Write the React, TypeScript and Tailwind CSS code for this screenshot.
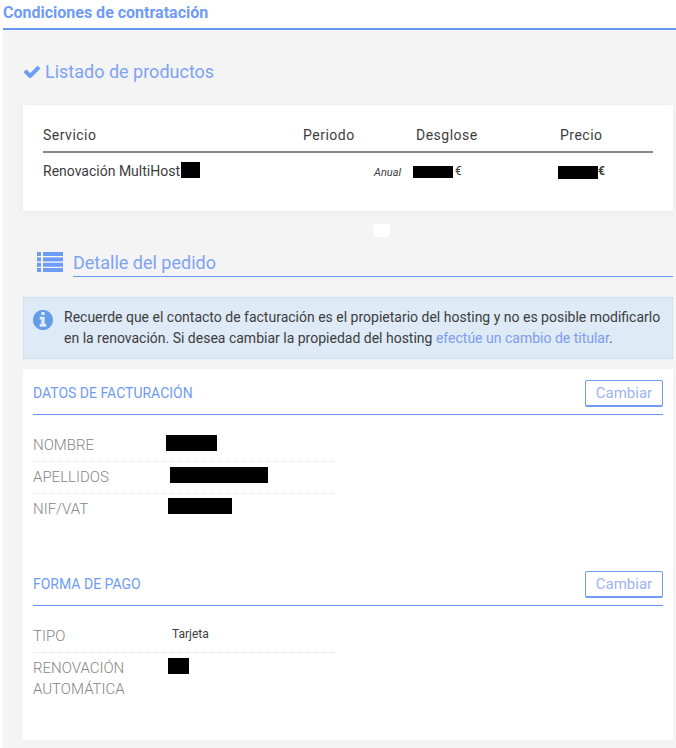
function Redacted({ className }: { className: string }) {
  return <span className={`block bg-black ${className}`} />;
}

function CheckIcon() {
  return (
    <svg viewBox="121 290 1550 1140" className="h-[13px] w-[16px] fill-[#6c9cf5]">
      <path d="M1671 566q0 40-28 68l-724 724-136 136q-28 28-68 28t-68-28l-136-136-362-362q-28-28-28-68t28-68l136-136q28-28 68-28t68 28l294 295 656-657q28-28 68-28t68 28l136 136q28 28 28 68z" />
    </svg>
  );
}

function ListIcon() {
  return (
    <svg viewBox="0 0 26 20" className="h-[20px] w-[26px] shrink-0 fill-[#6c9cf5]">
      <rect x="0" y="0" width="4" height="4" />
      <rect x="6" y="0" width="20" height="4" />
      <rect x="0" y="5.4" width="4" height="4" />
      <rect x="6" y="5.4" width="20" height="4" />
      <rect x="0" y="10.8" width="4" height="4" />
      <rect x="6" y="10.8" width="20" height="4" />
      <rect x="0" y="16" width="4" height="4" />
      <rect x="6" y="16" width="20" height="4" />
    </svg>
  );
}

function InfoIcon() {
  return (
    <svg viewBox="128 128 1536 1536" className="mt-[3px] h-[20px] w-[20px] shrink-0 fill-[#629de6]">
      <path d="M1152 1376v-160q0-14-9-23t-23-9h-96v-512q0-14-9-23t-23-9h-320q-14 0-23 9t-9 23v160q0 14 9 23t23 9h96v320h-96q-14 0-23 9t-9 23v160q0 14 9 23t23 9h448q14 0 23-9t9-23zm-128-896v-160q0-14-9-23t-23-9h-192q-14 0-23 9t-9 23v160q0 14 9 23t23 9h192q14 0 23-9t9-23zm640 416q0 209-103 385.5t-279.5 279.5-385.5 103-385.5-103-279.5-279.5-103-385.5 103-385.5 279.5-279.5 385.5-103 385.5 103 279.5 279.5 103 385.5z" />
    </svg>
  );
}

function SectionHead({ title }: { title: string }) {
  return (
    <div className="flex h-[35px] items-start justify-between border-b border-[#6699f5]">
      <h3 className="mt-[3px] text-[14px] leading-[20px] text-[#6f9bf5]">{title}</h3>
      <button className="h-[27px] w-[78px] rounded-[2px] border border-b-2 border-[#6f9bf5] bg-white text-[15px] leading-[22px] text-[#9db4f5]">
        Cambiar
      </button>
    </div>
  );
}

function Row({ label, children, last }: { label: React.ReactNode; children: React.ReactNode; last?: boolean }) {
  return (
    <div className={`flex w-[302px] items-start ${last ? '' : 'h-[32px] border-b border-dotted border-[#e2e2e2]'}`}>
      <div className="w-[133px] shrink-0 pt-[5px] text-[15px] leading-[21px] font-light text-[#858585]">{label}</div>
      {children}
    </div>
  );
}

export default function App() {
  return (
    <div className="h-[748px] w-[676px] overflow-hidden bg-white pl-[3px] font-['Roboto',sans-serif] text-[#3d3d3d]">
      <h1 className="h-[30px] border-b-2 border-[#6699f5] pt-[3px] text-[16px] leading-[20px] font-bold text-[#6f9bf5]">
        Condiciones de contratación
      </h1>

      <main className="relative h-[718px] bg-[#f4f4f4] pt-[29px] pr-[3px] pl-[20px]">
        <h2 className="flex h-[24px] items-center gap-[5px] text-[18px] text-[#7ea3f5]">
          <span className="ml-[1px]"><CheckIcon /></span>
          Listado de productos
        </h2>

        <section className="mt-[22px] h-[106px] bg-white px-[20px] pt-[20px] shadow-[0_1px_6px_rgba(0,0,0,0.05)]">
          <div className="grid h-[28px] grid-cols-[260px_113px_144px_1fr] border-b-2 border-[#888888] text-[14px] leading-[20px] tracking-[0.5px]">
            <span>Servicio</span>
            <span>Periodo</span>
            <span>Desglose</span>
            <span>Precio</span>
          </div>
          <div className="grid grid-cols-[331px_39px_145px_1fr] pt-[9px] text-[12px]">
            <div className="flex h-[16px] items-center text-[14px]">
              <span className="mt-[2px]">Renovación MultiHost</span>
              <Redacted className="ml-[1px] h-[16px] w-[19px]" />
            </div>
            <span className="pt-[3px] text-[11px] leading-[16px] italic">Anual</span>
            <div className="flex h-[16px] items-center gap-[2px]">
              <Redacted className="mt-[4px] h-[12px] w-[40px]" />
              <span className="mt-[2px]">€</span>
            </div>
            <div className="flex h-[16px] items-center">
              <Redacted className="mt-[5px] h-[13px] w-[40px]" />
              <span className="mt-[2px] font-bold">€</span>
            </div>
          </div>
        </section>

        <span className="absolute top-[194px] left-[370px] h-[13px] w-[17px] rounded-b-[5px] bg-white" />

        <div className="mt-[41px] flex items-start pl-[14px]">
          <ListIcon />
          <h2 className="-mt-[1px] ml-[10px] h-[26px] flex-1 border-b border-[#6699f5] text-[18px] leading-[24px] text-[#7ea3f5]">
            Detalle del pedido
          </h2>
        </div>

        <div className="mt-[20px] flex h-[62px] border border-[#c9e2f0] bg-[#deeaf6] pt-[9px] pl-[9px]">
          <InfoIcon />
          <p className="ml-[11px] text-[14px] leading-[21px]">
            Recuerde que el contacto de facturación es el propietario del hosting y no es posible modificarlo en la renovación. Si desea cambiar la propiedad del hosting{' '}
            <a className="text-[#7c9cf0]">efectúe un cambio de titular</a>.
          </p>
        </div>

        <section className="mt-[10px] h-[371px] bg-white px-[10px] pt-[11px]">
          <SectionHead title="DATOS DE FACTURACIÓN" />
          <div className="mt-[15px]">
            <Row label="NOMBRE"><Redacted className="mt-[5px] h-[16px] w-[51px]" /></Row>
            <Row label="APELLIDOS"><Redacted className="mt-[5px] ml-[4px] h-[16px] w-[98px]" /></Row>
            <Row label="NIF/VAT" last><Redacted className="mt-[4px] ml-[2px] h-[16px] w-[64px]" /></Row>
          </div>

          <div className="mt-[51px]">
            <SectionHead title="FORMA DE PAGO" />
          </div>
          <div className="mt-[15px]">
            <Row label="TIPO"><span className="mt-[3px] ml-[6px] text-[12px] leading-[20px]">Tarjeta</span></Row>
            <Row label={<>RENOVACIÓN<br />AUTOMÁTICA</>} last><Redacted className="mt-[5px] ml-[2px] h-[16px] w-[21px]" /></Row>
          </div>
        </section>
      </main>
    </div>
  );
}
